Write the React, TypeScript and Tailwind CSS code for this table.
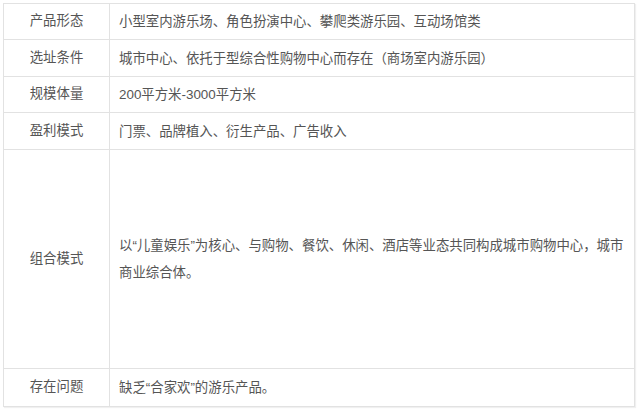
const rows: { label: string; text: string; h: string }[] = [
  { label: "产品形态", text: "小型室内游乐场、角色扮演中心、攀爬类游乐园、互动场馆类", h: "h-[36px]" },
  { label: "选址条件", text: "城市中心、依托于型综合性购物中心而存在（商场室内游乐园）", h: "h-[37px]" },
  { label: "规模体量", text: "200平方米-3000平方米", h: "h-[36px]" },
  { label: "盈利模式", text: "门票、品牌植入、衍生产品、广告收入", h: "h-[37px]" },
  {
    label: "组合模式",
    text: "以“儿童娱乐”为核心、与购物、餐饮、休闲、酒店等业态共同构成城市购物中心，城市商业综合体。",
    h: "h-[219px]",
  },
  { label: "存在问题", text: "缺乏“合家欢”的游乐产品。", h: "h-[37px]" },
];

export default function App() {
  return (
    <div className="h-[409px] w-[640px] bg-white pl-[3px] pt-[3px] font-['Liberation_Sans','Noto_Sans_CJK_SC',sans-serif] text-[13.4px] text-[#555]">
      <div className="w-[632px] border border-[#e2e2e2] shadow-[1px_1px_1px_rgba(0,0,0,0.06)]">
        {rows.map((r, i) => (
          <div
            key={r.label}
            className={`flex ${r.h} ${i < rows.length - 1 ? "border-b border-[#e2e2e2]" : ""}`}
          >
            <div className="flex w-[106px] shrink-0 items-center justify-center border-r border-[#e2e2e2]">
              {r.label}
            </div>
            <div className="flex flex-1 items-center pl-[9px] pr-[7px] leading-[27px]">
              <p>{r.text}</p>
            </div>
          </div>
        ))}
      </div>
    </div>
  );
}
